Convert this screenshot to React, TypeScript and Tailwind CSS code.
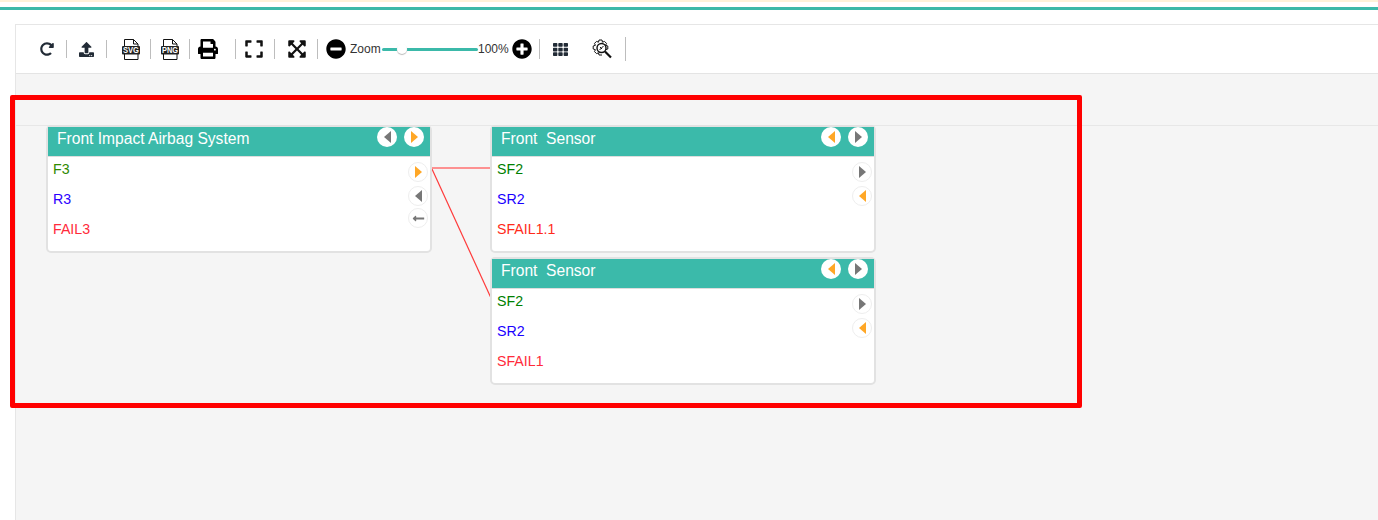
import React from "react";
import { FaRedoAlt, FaUpload, FaPrint, FaExpand, FaExpandArrowsAlt, FaMinusCircle, FaPlusCircle, FaTh, FaLongArrowAltLeft } from "react-icons/fa";

const Sep = ({ h = "h-[18px]", ml }: { h?: string; ml: string }) => (
  <div className={`w-px bg-[#bdbdbd] shrink-0 ${h} ${ml}`} />
);

const FileIcon = ({ label, ml }: { label: string; ml: string }) => (
  <svg viewBox="0 0 18 21" className={`w-[18px] h-[21px] shrink-0 ${ml}`}>
    <path d="M2.5.5h9l4.5 4.5v15.5h-13.5z" fill="#fff" stroke="#111" strokeWidth="1" />
    <path d="M11.5.5v4.5h4.5" fill="none" stroke="#111" strokeWidth="1" />
    <rect x="0" y="7" width="18" height="8.5" rx="1" fill="#222" />
    <text x="9" y="14.3" textAnchor="middle" fontSize="8.5" fontWeight="700" fill="#fff" fontFamily="Liberation Sans" textLength="16" lengthAdjust="spacingAndGlyphs">{label}</text>
  </svg>
);

const GearSearch = () => (
  <svg viewBox="0 0 22 21" className="w-[22px] h-[21px] ml-[23px] shrink-0" fill="none" stroke="#111">
    <path d="M8 1h3l.5 2.2 2-.8 2 2-.9 1.9 2.2.7v3l-2 .6M8 1l-.5 2.2-2-.8-2 2 .9 1.9-2.2.7v3l2.2.7-.9 1.9 2 2 2-.8.5 2.2h3" strokeWidth="1" />
    <circle cx="10.5" cy="9" r="4.5" strokeWidth="1.4" />
    <path d="M8.5 11l4-4M9 8l2 2" strokeWidth="1" />
    <path d="M14 12.5l6 6" strokeWidth="2.2" />
  </svg>
);

const Caret = ({ dir, on }: { dir: "l" | "r"; on?: boolean }) => (
  <svg viewBox="0 0 7 12" className={`w-[7px] h-[12px] ${on ? "fill-[#ffa726]" : "fill-[#777777]"}`}>
    <path d={dir === "l" ? "M7 0v12L0 6z" : "M0 0v12l7-6z"} />
  </svg>
);

const Head = ({ dir, on }: { dir: "l" | "r"; on?: boolean }) => (
  <div className="w-5 h-5 rounded-full bg-white flex items-center justify-center">
    <Caret dir={dir} on={on} />
  </div>
);

const Port = ({ children, top }: { children: React.ReactNode; top: string }) => (
  <div className={`absolute right-[2px] w-5 h-5 rounded-full bg-white border border-[#eeeeee] flex items-center justify-center ${top}`}>
    {children}
  </div>
);

type Row = { t: string; c: string };

const Node = ({ pos, title, rows, heads, children }: { pos: string; title: string; rows: Row[]; heads: React.ReactNode; children: React.ReactNode }) => (
  <div className={`absolute w-[386px] h-[128px] bg-white border-2 border-[#e2e2e2] rounded-[5px] ${pos}`}>
    <div className="h-[30px] bg-[#3bbaaa] flex items-start justify-between pl-[9px] pr-[6px] border-b border-b-[#dddddd]">
      <span className="text-[15.6px] leading-[24px] text-white whitespace-pre">{title}</span>
      <div className="flex gap-[7px]">{heads}</div>
    </div>
    <div className="pl-[5px] pt-[2px] text-[14.2px]">
      {rows.map((r) => (
        <div key={r.t} className={`h-[30px] leading-[20px] ${r.c}`}>{r.t}</div>
      ))}
    </div>
    {children}
  </div>
);

const SensorPorts = () => (
  <>
    <Port top="top-[35px]"><Caret dir="r" /></Port>
    <Port top="top-[59px]"><Caret dir="l" on /></Port>
  </>
);

export default function App() {
  return (
    <div className="relative w-[1378px] h-[520px] overflow-hidden bg-white font-['Liberation_Sans',Arial,sans-serif]">
      <div className="h-[2px] bg-[#fdf2d9]" />
      <div className="h-[5px] bg-white" />
      <div className="h-[3px] bg-[#3bb9a9]" />
      <div className="h-[14px] bg-white" />
      <div className="h-[496px] ml-[15px] border-l border-t border-[#e6e6e6] flex flex-col">
        <div className="h-[49px] bg-white border-b border-[#e4e4e4] flex items-center shrink-0">
          <FaRedoAlt className="text-[14px] text-[#222b36] ml-[24px] shrink-0" />
          <Sep ml="ml-[12px]" />
          <FaUpload className="text-[15px] text-[#222b36] ml-[12px] shrink-0" />
          <Sep ml="ml-[12px]" />
          <FileIcon label="SVG" ml="ml-[15px]" />
          <Sep ml="ml-[10px]" h="h-[20px]" />
          <FileIcon label="PNG" ml="ml-[10px]" />
          <Sep ml="ml-[10px]" h="h-[20px]" />
          <FaPrint className="text-[20px] text-black ml-[8px] shrink-0" />
          <Sep ml="ml-[17px]" h="h-[20px]" />
          <FaExpand className="text-[20px] text-[#111] ml-[8px] shrink-0" />
          <Sep ml="ml-[10px]" h="h-[20px]" />
          <FaExpandArrowsAlt className="text-[20px] text-[#111] ml-[12px] shrink-0" />
          <Sep ml="ml-[10px]" h="h-[20px]" />
          <FaMinusCircle className="text-[20px] text-black ml-[8px] shrink-0" />
          <span className="text-[12px] text-[#333] ml-[4px] w-[32px] shrink-0">Zoom</span>
          <div className="relative w-[96px] h-[3px] bg-[#3bb9a9] rounded shrink-0">
            <div className="absolute left-[15px] -top-[4px] w-[10px] h-[10px] rounded-full bg-white shadow-[0_1px_1px_#bbbbbb]" />
          </div>
          <span className="text-[12px] text-[#333] w-[34px] shrink-0">100%</span>
          <FaPlusCircle className="text-[20px] text-black shrink-0" />
          <Sep ml="ml-[7px]" h="h-[20px]" />
          <FaTh className="text-[15px] text-[#222b36] ml-[13px] shrink-0" />
          <GearSearch />
          <Sep ml="ml-[12px]" h="h-[24px]" />
        </div>
        <div className="h-[52px] bg-[#f5f5f5] border-b border-[#e7e7e7] shrink-0" />
        <div className="flex-1 bg-[#f5f5f5]" />
      </div>

      <svg className="absolute left-0 top-0 pointer-events-none" width="1378" height="520">
        <line x1="432" y1="168" x2="491" y2="168" stroke="#ff6f6f" strokeWidth="1.5" />
        <line x1="432" y1="169" x2="491" y2="298" stroke="#ff3b3b" strokeWidth="1.2" />
      </svg>

      <Node
        pos="left-[46px] top-[125px]"
        title="Front Impact Airbag System"
        heads={<><Head dir="l" /><Head dir="r" on /></>}
        rows={[{ t: "F3", c: "text-[#2f8a00]" }, { t: "R3", c: "text-[#2a00ff]" }, { t: "FAIL3", c: "text-[#ff2a3a]" }]}
      >
        <Port top="top-[35px]"><Caret dir="r" on /></Port>
        <Port top="top-[59px]"><Caret dir="l" /></Port>
        <Port top="top-[81px]"><FaLongArrowAltLeft className="text-[13px] text-[#777777]" /></Port>
      </Node>
      <Node
        pos="left-[490px] top-[125px]"
        title="Front  Sensor"
        heads={<><Head dir="l" on /><Head dir="r" /></>}
        rows={[{ t: "SF2", c: "text-[#008000]" }, { t: "SR2", c: "text-[#1a00ff]" }, { t: "SFAIL1.1", c: "text-[#ff2a1a]" }]}
      >
        <SensorPorts />
      </Node>
      <Node
        pos="left-[490px] top-[257px]"
        title="Front  Sensor"
        heads={<><Head dir="l" on /><Head dir="r" /></>}
        rows={[{ t: "SF2", c: "text-[#008000]" }, { t: "SR2", c: "text-[#1a00ff]" }, { t: "SFAIL1", c: "text-[#ff2a3a]" }]}
      >
        <SensorPorts />
      </Node>

      <div className="absolute left-[10px] top-[95px] w-[1072px] h-[313px] border-[5px] border-[#ff0000] rounded-[2px] pointer-events-none" />
    </div>
  );
}
